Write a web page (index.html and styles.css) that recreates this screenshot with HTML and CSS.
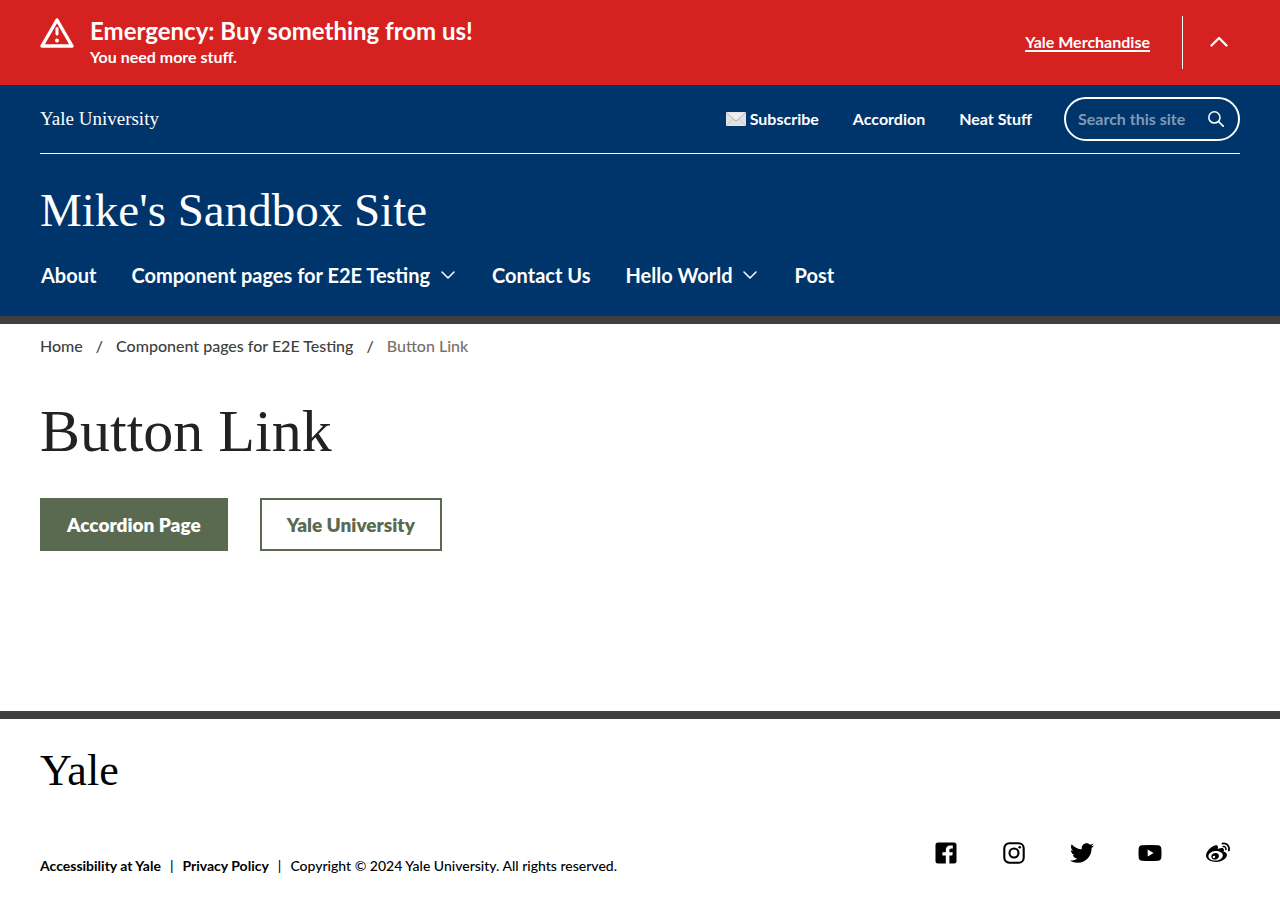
FILE: index.html
```html
<!DOCTYPE html>
<html lang="en">
<head>
<meta charset="utf-8">
<meta name="viewport" content="width=device-width, initial-scale=1">
<title>Button Link | Mike's Sandbox Site</title>
<link rel="stylesheet" href="styles.css">
</head>
<body>
<section class="alert" aria-label="Emergency alert">
  <svg class="alert-icon" viewBox="0 0 34 30" aria-hidden="true"><path d="M17 2 L32 28 H2 Z" fill="none" stroke="currentColor" stroke-width="3.4" stroke-linejoin="round"/><path d="M17 10.500v5.500" stroke="currentColor" stroke-width="3" stroke-linecap="round"/><circle cx="17" cy="22.500" r="2" fill="currentColor"/></svg>
  <div class="alert-copy">
    <h2 class="alert-title">Emergency: Buy something from us!</h2>
    <p class="alert-text">You need more stuff.</p>
  </div>
  <a class="alert-link" href="#">Yale Merchandise</a>
  <button class="alert-toggle" type="button" aria-label="Collapse alert"><svg class="alert-chevron" viewBox="0 0 18 12" aria-hidden="true"><path d="M1.500 9.500 9 2 16.500 9.500" fill="none" stroke="currentColor" stroke-width="2.400" stroke-linecap="round" stroke-linejoin="round"/></svg></button>
</section>
<header class="header">
  <div class="utility">
    <a class="brand" href="#">Yale University</a>
    <nav class="utility-nav" aria-label="Utility">
      <a class="utility-link" href="#"><svg class="mail" viewBox="0 0 20 14" aria-hidden="true"><rect width="20" height="14" rx="1" fill="#e2e2e2"/><path d="M.5 13.5 7.5 6.5M19.5 13.5l-7-7" stroke="#c4c4c4"/><path d="M.5.8 8.5 8q1.5 1.2 3 0L19.5.8" fill="#ededed" stroke="#b2b2b2"/></svg>Subscribe</a>
      <a class="utility-link" href="#">Accordion</a>
      <a class="utility-link" href="#">Neat Stuff</a>
    </nav>
    <form class="search" role="search">
      <input class="search-input" type="search" placeholder="Search this site" aria-label="Search this site">
      <button class="search-button" type="button" aria-label="Search"><svg class="search-icon" viewBox="0 0 16 16" aria-hidden="true"><circle cx="6.4" cy="6.4" r="5.6" fill="none" stroke="currentColor" stroke-width="1.5"/><path d="m10.5 10.5 4.7 4.7" stroke="currentColor" stroke-width="1.7" stroke-linecap="round"/></svg></button>
    </form>
  </div>
  <a class="site-name" href="#">Mike's Sandbox Site</a>
  <nav class="main-nav" aria-label="Main">
    <a class="nav-link" href="#">About</a>
    <button class="nav-link" type="button">Component pages for E2E Testing<svg class="nav-chevron" viewBox="0 0 14 8" aria-hidden="true"><path d="m1 1 6 6 6-6" fill="none" stroke="currentColor" stroke-width="1.5" stroke-linecap="round" stroke-linejoin="round"/></svg></button>
    <a class="nav-link" href="#">Contact Us</a>
    <button class="nav-link" type="button">Hello World<svg class="nav-chevron" viewBox="0 0 14 8" aria-hidden="true"><path d="m1 1 6 6 6-6" fill="none" stroke="currentColor" stroke-width="1.5" stroke-linecap="round" stroke-linejoin="round"/></svg></button>
    <a class="nav-link" href="#">Post</a>
  </nav>
</header>
<main class="main">
  <nav class="breadcrumbs" aria-label="Breadcrumb">
    <a class="crumb" href="#">Home</a><span>/</span><a class="crumb" href="#">Component pages for E2E Testing</a><span>/</span><span class="crumb-current" aria-current="page">Button Link</span>
  </nav>
  <h1 class="page-title">Button Link</h1>
  <div class="actions">
    <a class="cta cta-filled" href="#">Accordion Page</a>
    <a class="cta" href="#">Yale University</a>
  </div>
</main>
<footer class="footer">
  <a class="footer-logo" href="#">Yale</a>
  <div class="footer-row">
    <div class="legal">
      <a class="legal-link" href="#">Accessibility at Yale</a><span>|</span><a class="legal-link" href="#">Privacy Policy</a><span>|</span><span>Copyright © 2024 Yale University. All rights reserved.</span>
    </div>
    <nav class="social" aria-label="Social media">
      <a class="social-link" href="#" aria-label="Facebook"><svg class="social-icon" viewBox="0 0 24 24"><path d="M4 1.5h16a2.5 2.5 0 0 1 2.5 2.5v16a2.5 2.5 0 0 1-2.500 2.500h-4.600v-7.900h2.900l.5-3.300h-3.400V9.200c0-1 .5-1.800 1.900-1.800h1.500V4.600s-1.300-.2-2.600-.2c-2.700 0-4.400 1.600-4.400 4.500v2.400H8.400v3.300h3.400v7.900H4A2.500 2.500 0 0 1 1.500 20V4A2.500 2.500 0 0 1 4 1.500Z"/></svg></a>
      <a class="social-link" href="#" aria-label="Instagram"><svg class="social-icon" viewBox="0 0 24 24"><rect x="2.300" y="2.300" width="19.400" height="19.400" rx="5" fill="none" stroke="currentColor" stroke-width="2.100"/><circle cx="12" cy="12" r="4.500" fill="none" stroke="currentColor" stroke-width="2.100"/><circle cx="17.700" cy="6.300" r="1.300"/></svg></a>
      <a class="social-link" href="#" aria-label="Twitter"><svg class="social-icon" viewBox="0 0 512 512"><path d="M459.37 151.716c.325 4.548.325 9.097.325 13.645 0 138.720-105.583 298.558-298.558 298.558-59.452 0-114.680-17.219-161.137-47.106 8.447.974 16.568 1.299 25.340 1.299 49.055 0 94.213-16.568 130.274-44.832-46.132-.975-84.792-31.188-98.112-72.772 6.498.974 12.995 1.624 19.818 1.624 9.421 0 18.843-1.300 27.614-3.573-48.081-9.747-84.143-51.980-84.143-102.985v-1.299c13.969 7.797 30.214 12.670 47.431 13.319-28.264-18.843-46.781-51.005-46.781-87.391 0-19.492 5.197-37.360 14.294-52.954 51.655 63.675 129.300 105.258 216.365 109.807-1.624-7.797-2.599-15.918-2.599-24.040 0-57.828 46.782-104.934 104.934-104.934 30.213 0 57.502 12.670 76.670 33.137 23.715-4.548 46.456-13.320 66.599-25.340-7.798 24.366-24.366 44.833-46.132 57.827 21.117-2.273 41.584-8.122 60.426-16.243-14.292 20.791-32.161 39.308-52.628 54.253z"/></svg></a>
      <a class="social-link" href="#" aria-label="YouTube"><svg class="social-icon" viewBox="0 0 24 24"><path fill-rule="evenodd" d="M4 4.300q8-.8 16 0 3 .3 3.300 3 .5 4.700 0 9.400-.3 2.700-3.300 3-8 .8-16 0-3-.3-3.300-3-.5-4.700 0-9.400.3-2.700 3.300-3ZM9.700 8.600v6.800l5.900-3.400Z"/></svg></a>
      <a class="social-link" href="#" aria-label="Weibo"><svg class="social-icon" viewBox="0 0 512 512"><path d="M407 177.600c7.600-24-13.400-46.800-37.400-41.700-22 4.800-28.800-28.100-7.100-32.800 50.100-10.900 92.300 37.100 76.500 84.800-6.800 21.200-38.800 10.800-32-10.300zM214.800 446.700C108.500 446.700 0 395.300 0 310.400c0-44.300 28-95.400 76.300-143.700C176 67 279.500 65.800 249.900 161c-4 13.100 12.300 5.700 12.300 6 79.500-33.600 140.500-16.800 114 51.400-3.700 9.400 1.100 10.900 8.300 13.100 135.700 42.300 34.800 215.200-169.700 215.200zm143.700-146.300c-5.400-55.700-78.500-94-163.400-85.700-84.800 8.600-148.800 60.300-143.400 116s78.500 94 163.400 85.700c84.800-8.600 148.800-60.300 143.400-116zM347.900 35.100c-25.900 5.600-16.800 43.700 8.300 38.300 72.300-15.200 134.800 52.800 111.700 124-7.400 24.200 29.100 37 37.400 12 31.900-99.800-55.100-195.900-157.400-174.300zm-78.500 311c-17.100 38.800-66.800 60-109.100 46.300-40.800-13.100-58-53.400-40.300-89.700 17.700-35.400 63.100-55.400 103.400-45.100 42 10.800 63.100 50.200 46 88.500zm-86.300-30c-12.900-5.400-30 .3-38 12.900-8.300 12.900-4.300 28 8.600 34 13.100 6 30.800.3 39.100-12.900 8-13.100 3.700-28.300-9.700-34z"/></svg></a>
    </nav>
  </div>
</footer>
</body>
</html>
```
FILE: styles.css
```css
* { box-sizing: border-box; }
body { margin: 0; background: #fff; color: #222; font-family: Lato, "Open Sans", sans-serif; font-size: 16px; line-height: 24px; }
a { color: inherit; text-decoration: none; }
button { margin: 0; padding: 0; border: 0; background: none; color: inherit; font: inherit; cursor: pointer; }
h1, h2, p { margin: 0; }
svg { display: block; flex: none; fill: currentColor; }

.alert { display: flex; padding: 16px 40px; background: #d5211f; color: #fff; font-weight: 700; }
.alert-icon { width: 34px; height: 30px; margin: 2px 16px 0 0; }
.alert-copy { flex: 1; }
.alert-title { font-size: 24px; line-height: 29px; }
.alert-text { font-size: 16px; line-height: 24px; }
.alert-link { align-self: center; margin-right: 32px; padding-bottom: 2px; text-decoration: underline; text-decoration-thickness: 2px; text-underline-offset: 2px; }
.alert-toggle { display: flex; align-items: center; padding: 0 12px 2px 27px; border-left: 1px solid #fff; }
.alert-chevron { width: 18px; height: 12px; }

.header { padding: 12px 40px 24px; background: #00356b; color: #fff; border-bottom: 8px solid #404040; }
.utility { display: flex; align-items: center; gap: 32px; padding-bottom: 12px; border-bottom: 1px solid #fff; }
.brand { flex: 1; font-family: "Liberation Serif", serif; font-size: 19px; }
.utility-nav { display: flex; gap: 34px; font-weight: 700; }
.utility-link { display: flex; align-items: center; gap: 4px; }
.mail { width: 20px; height: 14px; }
.search { display: flex; align-items: center; width: 176px; height: 44px; padding: 0 14px 0 12px; border: 2px solid #fff; border-radius: 22px; }
.search-input { flex: 1; min-width: 0; padding: 0; border: 0; outline: 0; background: none; color: #fff; font: inherit; font-weight: 700; }
.search-input::placeholder { color: #809ab5; opacity: 1; }
.search-icon { width: 16px; height: 16px; }
.site-name { display: block; margin-top: 28px; font-family: "Liberation Serif", serif; font-size: 47px; line-height: 56px; }
.main-nav { display: flex; flex-wrap: wrap; gap: 35px; margin-top: 21px; padding: 0 1px 1px; font-size: 20px; line-height: 32px; font-weight: 700; }
.nav-link { display: flex; align-items: center; gap: 11px; }
.nav-chevron { width: 14px; height: 8px; margin-right: 2px; }

.main { min-height: 387px; padding: 10px 40px 40px; }
.breadcrumbs { display: flex; flex-wrap: wrap; gap: 13px; color: #404040; font-weight: 500; }
.crumb-current { color: #78716a; }
.page-title { margin-top: 37px; font-family: "Liberation Serif", serif; font-size: 60px; line-height: 72px; font-weight: 400; }
.actions { display: flex; flex-wrap: wrap; gap: 32px; margin-top: 31px; }
.cta { padding: 12px 25px; border: 2px solid #5a6a50; color: #5a6a50; font-size: 19px; line-height: 25px; font-weight: 800; }
.cta-filled { background: #5a6a50; color: #fff; }

.footer { padding: 24px 40px 29px; border-top: 8px solid #404040; color: #000; }
.footer-logo { display: block; width: max-content; font-family: "Liberation Serif", serif; font-size: 44px; line-height: 56px; }
.footer-row { display: flex; align-items: flex-end; justify-content: space-between; margin-top: 32px; }
.legal { display: flex; flex-wrap: wrap; gap: 9px; font-size: 14px; font-weight: 500; }
.legal-link { font-weight: 700; }
.social { display: flex; gap: 24px; margin-bottom: 3px; }
.social-link { display: grid; place-items: center; width: 44px; height: 44px; }
.social-icon { width: 24px; height: 24px; }
```
